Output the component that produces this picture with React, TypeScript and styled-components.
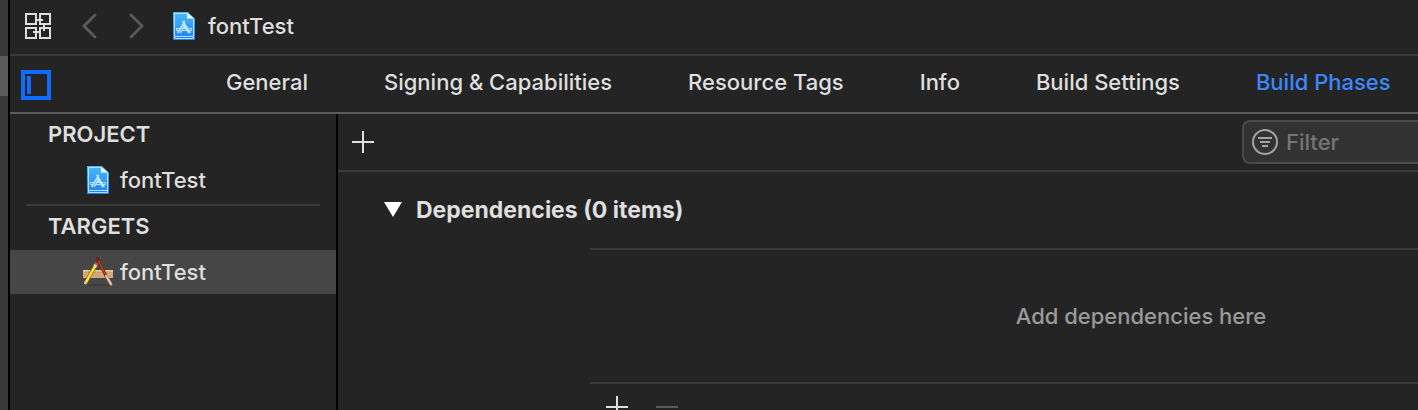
import React, { useState } from "react";
import styled, { createGlobalStyle } from "styled-components";

const color = {
  panel: "#242424",
  gutter: "#383838",
  gutterLight: "#5b5b5b",
  text: "#dfdfdf",
  muted: "#9a9a9a",
  line: "#3a3a3a",
  strongLine: "#5c5c5c",
  selected: "#464646",
  accent: "#3b88fd",
};

const GlobalStyle = createGlobalStyle`
  *, *::before, *::after { box-sizing: border-box; }
  body {
    margin: 0;
    background: ${color.panel};
    color: ${color.text};
    font: 450 22px/28px Inter, "Liberation Sans", sans-serif;
  }
  button, input { font: inherit; color: inherit; }
  svg { display: block; flex: none; }
`;

const Window = styled.div`
  display: flex;
  height: 100vh;
  overflow: hidden;
`;

const Gutter = styled.div`
  flex: none;
  width: 10px;
  padding-top: 56px;
  background: ${color.gutter};
  border-right: 2px solid #000;
`;

const GutterMark = styled.div`
  height: 40px;
  background: ${color.gutterLight};
`;

const Editor = styled.div`
  flex: 1;
  min-width: 0;
  display: flex;
  flex-direction: column;
`;

const PathBar = styled.header`
  flex: none;
  display: flex;
  align-items: center;
  height: 56px;
  padding: 0 15px 2px;
  border-bottom: 2px solid ${color.line};
`;

const IconButton = styled.button`
  display: flex;
  align-items: center;
  justify-content: center;
  padding: 0;
  border: 0;
  background: none;
  cursor: pointer;
`;

const History = styled.div`
  display: flex;
  gap: 30px;
  margin: 0 29px 0 31px;
`;

const Crumb = styled.a`
  display: flex;
  align-items: center;
  gap: 13px;
  color: inherit;
  text-decoration: none;
`;

const TabBar = styled.nav`
  flex: none;
  display: flex;
  align-items: center;
  height: 58px;
  padding: 2px 0 0 11px;
  border-bottom: 2px solid ${color.strongLine};
`;

const Tabs = styled.div`
  display: flex;
  gap: 76px;
  margin-left: 175px;
  padding-bottom: 6px;
`;

const Tab = styled.button<{ $active: boolean }>`
  padding: 0;
  border: 0;
  background: none;
  white-space: nowrap;
  color: ${(p) => (p.$active ? color.accent : color.text)};
  cursor: pointer;
`;

const Body = styled.div`
  flex: 1;
  min-height: 0;
  display: flex;
`;

const Sidebar = styled.aside`
  flex: none;
  width: 328px;
  border-right: 2px solid #000;
`;

const GroupTitle = styled.h2`
  margin: 0;
  padding: 6px 0 10px 38px;
  font-size: 22px;
  line-height: 28px;
  font-weight: 600;
`;

const Item = styled.button<{ $selected?: boolean }>`
  display: flex;
  align-items: center;
  gap: 6px;
  width: 100%;
  height: 44px;
  padding: 0 0 0 72px;
  border: 0;
  background: ${(p) => (p.$selected ? color.selected : "none")};
  text-align: left;
  cursor: pointer;
`;

const ItemIcon = styled.span`
  display: flex;
  justify-content: center;
  width: 32px;
`;

const Divider = styled.hr`
  height: 2px;
  margin: 2px 16px 0;
  border: 0;
  background: ${color.line};
`;

const Main = styled.main`
  flex: 1;
  min-width: 0;
  overflow: hidden;
`;

const Toolbar = styled.div`
  display: flex;
  align-items: center;
  justify-content: space-between;
  height: 58px;
  padding-left: 14px;
  border-bottom: 2px solid ${color.line};
`;

const Filter = styled.label`
  display: flex;
  align-items: center;
  gap: 8px;
  width: 176px;
  height: 44px;
  padding-left: 8px;
  border: 2px solid #4a4a4a;
  border-right: 0;
  border-radius: 8px 0 0 8px;
  background: #323232;
`;

const FilterInput = styled.input`
  flex: 1;
  min-width: 0;
  padding: 0;
  border: 0;
  outline: 0;
  background: none;
  &::placeholder { color: #757575; opacity: 1; }
`;

const PhaseHeader = styled.button`
  display: flex;
  align-items: center;
  gap: 14px;
  width: 100%;
  height: 76px;
  padding: 0 0 0 46px;
  border: 0;
  background: none;
  font-size: 23px;
  font-weight: 700;
  text-align: left;
  cursor: pointer;
`;

/* The phase table is wider than the pane and runs on past its right edge. */
const PhaseTable = styled.section`
  margin: 0 -274px 0 252px;
`;

const DropArea = styled.div`
  display: flex;
  align-items: center;
  justify-content: center;
  height: 136px;
  border: solid ${color.line};
  border-width: 2px 0;
  color: ${color.muted};
`;

const PhaseFooter = styled.div`
  display: flex;
  gap: 28px;
  padding: 12px 16px;
`;

const GridIcon = () => (
  <svg width="26" height="26" viewBox="0 0 26 26" fill="none" stroke="#dfdfdf" strokeWidth="2">
    <path d="M1 1h10v10H1zM15 1h10v10H15zM1 15h10v10H1zM15 15h10v10H15z" />
    <path d="M11 7h7M19 11v7M8 19h7" />
  </svg>
);

const Chevron = ({ right = false }: { right?: boolean }) => (
  <svg width="16" height="26" viewBox="0 0 16 26" fill="none" stroke="#5a5a5a" strokeWidth="2.800" strokeLinecap="round">
    <path d={right ? "M3 2l11 11L3 24" : "M13 2L2 13l11 11"} />
  </svg>
);

const ProjectIcon = () => (
  <svg width="22" height="30" viewBox="0 0 22 30">
    <defs>
      <linearGradient id="sheet" x1="0" y1="0" x2="0" y2="1">
        <stop offset="0" stopColor="#4dbbf6" />
        <stop offset="1" stopColor="#1a80fa" />
      </linearGradient>
    </defs>
    <path d="M0 1h15l7 7v21H0z" fill="url(#sheet)" />
    <path d="M1.500 2.500H14M20.500 8v19.500h-19v-25M1.500 25.500h19" fill="none" stroke="#b5e0ff" strokeWidth="1" />
    <path d="M14 2v5.500h7.500z" fill="#f4f8fb" />
    <g fill="none" stroke="#c2e5ff" strokeWidth="1.500" strokeLinecap="round">
      <path d="M11.500 10.500L5 21.500M10 10.500L17 21.500M12 13.500L7.500 21.500M11 14.500l4.500 7" />
      <path d="M3.500 17.500h4M10 17.500h3M16 17.500h2.500v2h-2M3.500 17.500v2h2M9 19.500h4" strokeWidth="1" />
    </g>
  </svg>
);

const TargetIcon = () => (
  <svg width="32" height="32" viewBox="0 0 32 32">
    <ellipse cx="17" cy="29" rx="12" ry="1" fill="#3b3b3b" />
    <path d="M1 14h30v8H1z" fill="#d6a677" />
    <path d="M1 14h30v2H1z" fill="#ebc79c" />
    <path d="M4 15v2M7 15v2M10 15v2M13 15v2M16 15v2M19 15v2M22 15v2M25 15v2M28 15v2" stroke="#b58a5e" strokeWidth="1" />
    <path d="M15 2L24 20" stroke="#6b2212" strokeWidth="2.800" strokeLinecap="round" />
    <path d="M16.500 5l6.500 13" stroke="#d9481f" strokeWidth="1.200" />
    <path d="M24 20l5 8.500" stroke="#8d5f50" strokeWidth="3.400" strokeLinecap="round" />
    <path d="M24.300 20l4.700 8" stroke="#e6c3b4" strokeWidth="2.200" strokeLinecap="round" />
    <path d="M13.500 9.500L4 26" stroke="#8f6f14" strokeWidth="3.800" />
    <path d="M13.500 9.500L4 26" stroke="#ffe53c" strokeWidth="2.400" />
    <path d="M14.800 7.200l-1 1.700" stroke="#e8475b" strokeWidth="3.600" />
    <path d="M13.800 9l-.7 1.200" stroke="#e6e6e6" strokeWidth="3.600" />
    <path d="M2.400 25l3.300 2L2 29.500z" fill="#efc999" />
    <path d="M2.100 28l1.400.6L2 29.800z" fill="#222" />
  </svg>
);

const NavigatorIcon = () => (
  <svg width="30" height="30" viewBox="0 0 30 30">
    <path d="M2 2h26v26H2z" fill="none" stroke="#0f6cff" strokeWidth="4" />
    <path d="M6 6h4v18H6z" fill="#0f6cff" />
  </svg>
);

const PlusIcon = () => (
  <svg width="22" height="22" viewBox="0 0 22 22" fill="none" stroke="#dfdfdf" strokeWidth="2">
    <path d="M0 11h22M11 0v22" />
  </svg>
);

const MinusIcon = () => (
  <svg width="22" height="22" viewBox="0 0 22 22" fill="none" stroke="#5a5a5a" strokeWidth="2">
    <path d="M0 11h22" />
  </svg>
);

const FilterIcon = () => (
  <svg width="26" height="26" viewBox="0 0 26 26" fill="none" stroke="#a3a3a3" strokeWidth="2">
    <circle cx="13" cy="13" r="12" />
    <path d="M6 9h14M8 13h10M10 17h6" />
  </svg>
);

const Disclosure = ({ open }: { open: boolean }) => (
  <svg width="18" height="16" viewBox="0 0 18 16" fill="#fff">
    <path d={open ? "M0 0h18L9 15z" : "M2 0l14 8-14 8z"} />
  </svg>
);

const tabs = [
  "General",
  "Signing & Capabilities",
  "Resource Tags",
  "Info",
  "Build Settings",
  "Build Phases",
];

export default function App() {
  const [active, setActive] = useState("Build Phases");
  const [open, setOpen] = useState(true);

  return (
    <>
      <GlobalStyle />
      <Window>
        <Gutter>
          <GutterMark />
        </Gutter>
        <Editor>
          <PathBar>
            <IconButton aria-label="Related items"><GridIcon /></IconButton>
            <History>
              <IconButton aria-label="Back"><Chevron /></IconButton>
              <IconButton aria-label="Forward"><Chevron right /></IconButton>
            </History>
            <Crumb href="#fontTest">
              <ProjectIcon />
              fontTest
            </Crumb>
          </PathBar>
          <TabBar>
            <IconButton aria-label="Toggle project and targets list"><NavigatorIcon /></IconButton>
            <Tabs>
              {tabs.map((name) => (
                <Tab key={name} $active={name === active} onClick={() => setActive(name)}>
                  {name}
                </Tab>
              ))}
            </Tabs>
          </TabBar>
          <Body>
            <Sidebar>
              <GroupTitle>PROJECT</GroupTitle>
              <Item>
                <ItemIcon><ProjectIcon /></ItemIcon>
                fontTest
              </Item>
              <Divider />
              <GroupTitle>TARGETS</GroupTitle>
              <Item $selected>
                <ItemIcon><TargetIcon /></ItemIcon>
                fontTest
              </Item>
            </Sidebar>
            <Main>
              <Toolbar>
                <IconButton aria-label="Add build phase"><PlusIcon /></IconButton>
                <Filter>
                  <FilterIcon />
                  <FilterInput type="text" placeholder="Filter" aria-label="Filter" />
                </Filter>
              </Toolbar>
              <PhaseHeader aria-expanded={open} onClick={() => setOpen(!open)}>
                <Disclosure open={open} />
                Dependencies (0 items)
              </PhaseHeader>
              {open && (
                <PhaseTable>
                  <DropArea>Add dependencies here</DropArea>
                  <PhaseFooter>
                    <IconButton aria-label="Add dependency"><PlusIcon /></IconButton>
                    <IconButton aria-label="Remove dependency" disabled><MinusIcon /></IconButton>
                  </PhaseFooter>
                </PhaseTable>
              )}
            </Main>
          </Body>
        </Editor>
      </Window>
    </>
  );
}
